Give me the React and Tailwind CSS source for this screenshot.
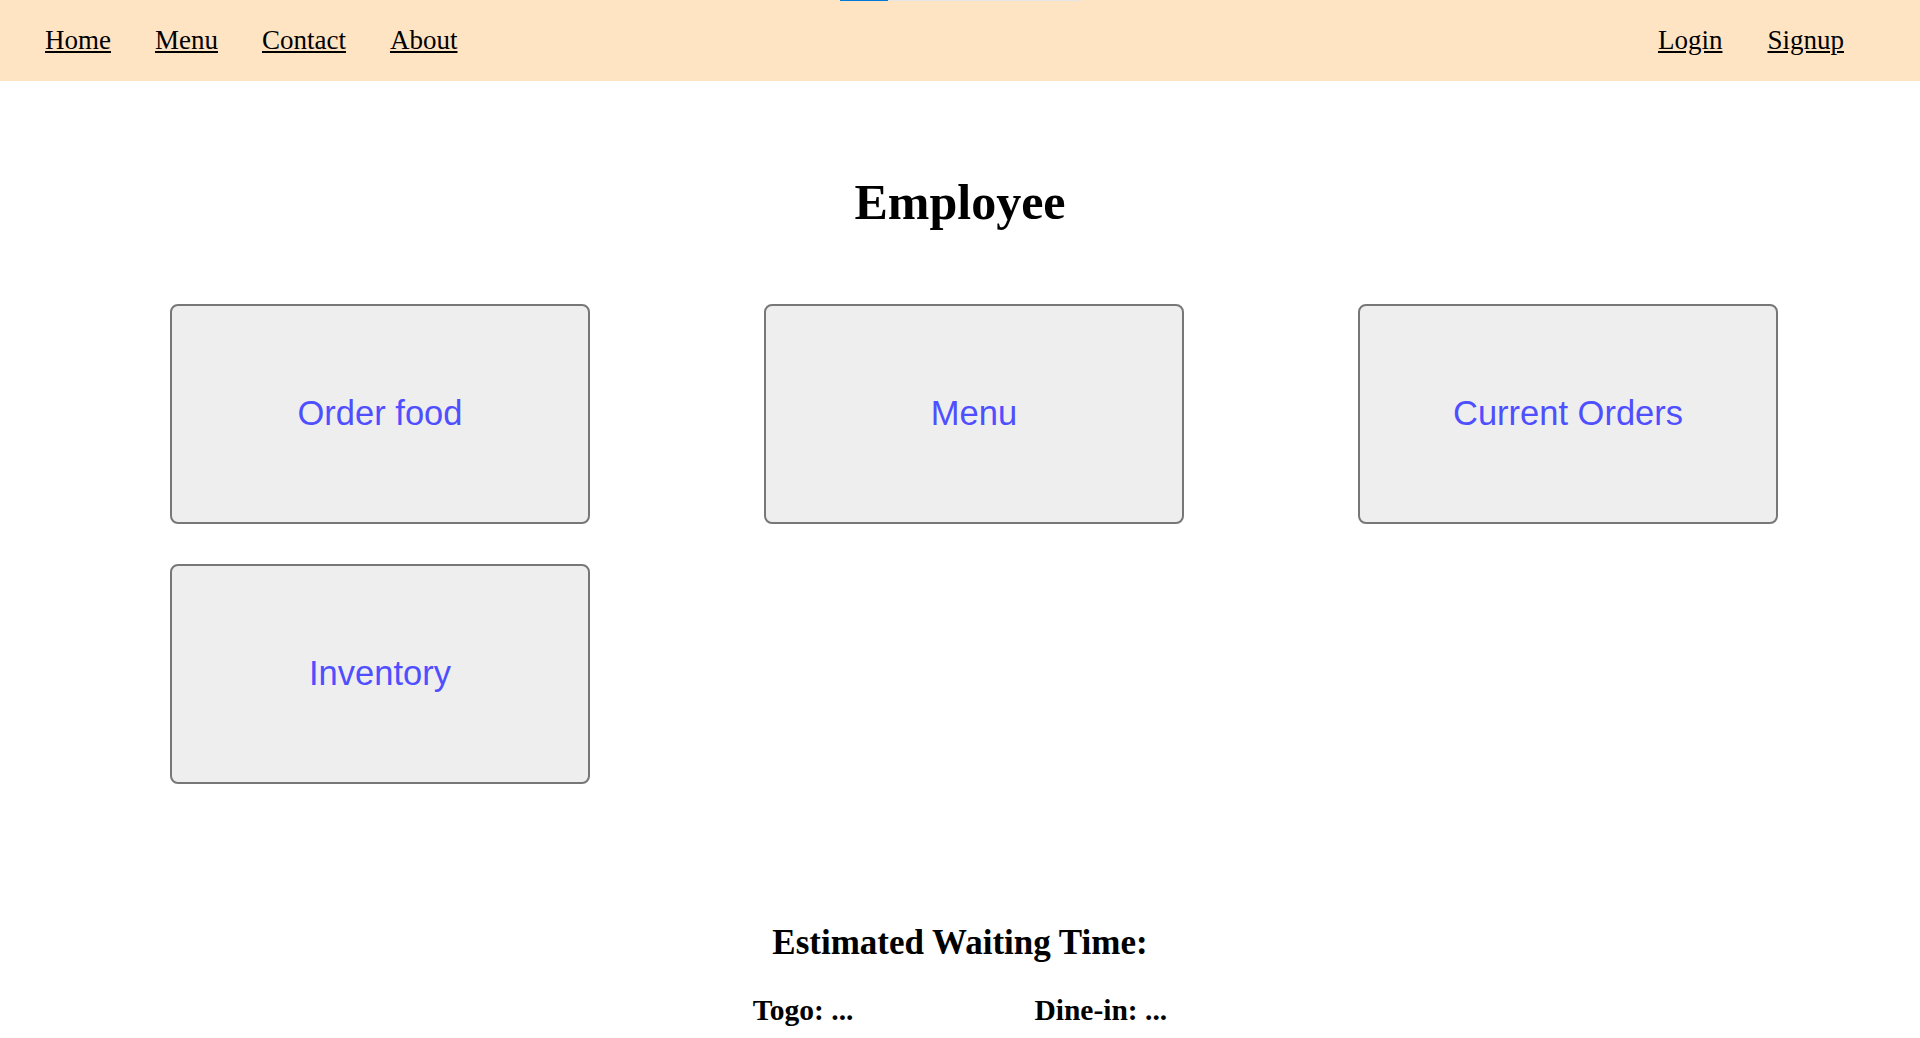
import React from 'react';

const LEFT_LINKS = ['Home', 'Menu', 'Contact', 'About'];
const RIGHT_LINKS = ['Login', 'Signup'];
const TILES = ['Order food', 'Menu', 'Current Orders', 'Inventory'];

function NavBar() {
    return (
        <header className="relative h-[81px] bg-[#ffe4c4] flex items-center justify-between pl-[45px] pr-[76px]">
            {/* page-load progress strip */}
            <div className="absolute top-0 left-[840px] w-[241px] h-px bg-[#e6e6e6]">
                <div className="w-[48px] h-px bg-[#0078d7]" />
            </div>
            <nav className="flex gap-[44px]">
                {LEFT_LINKS.map(l => (
                    <a key={l} href="#" className="underline text-[27px] leading-none text-black">{l}</a>
                ))}
            </nav>
            <nav className="flex gap-[45px]">
                {RIGHT_LINKS.map(l => (
                    <a key={l} href="#" className="underline text-[27px] leading-none text-black">{l}</a>
                ))}
            </nav>
        </header>
    );
}

function Tile({ label }) {
    return (
        <a
            href="#"
            className="h-[220px] border-2 border-[#777] rounded-lg bg-[#eeeeee] flex items-center justify-center text-[34.5px] text-[#4f4fff] font-['Liberation_Sans',Arial,sans-serif]"
        >
            {label}
        </a>
    );
}

export default function App() {
    return (
        <div className="min-h-screen bg-white text-black font-['Liberation_Serif','Times_New_Roman',serif]">
            <NavBar />
            <main>
                <h1 className="mt-[96px] text-center text-[50px] font-bold leading-none">Employee</h1>

                <div className="mt-[77px] pl-[170px] grid grid-cols-[repeat(3,420px)] gap-x-[174px] gap-y-[40px]">
                    {TILES.map(t => <Tile key={t} label={t} />)}
                </div>

                <h2 className="mt-[141px] text-center text-[35px] font-bold leading-none">Estimated Waiting Time:</h2>
                <div className="mt-[36px] flex justify-center gap-[181px] text-[29.5px] font-bold leading-none">
                    <span>Togo: ...</span>
                    <span>Dine-in: ...</span>
                </div>
            </main>
        </div>
    );
}
